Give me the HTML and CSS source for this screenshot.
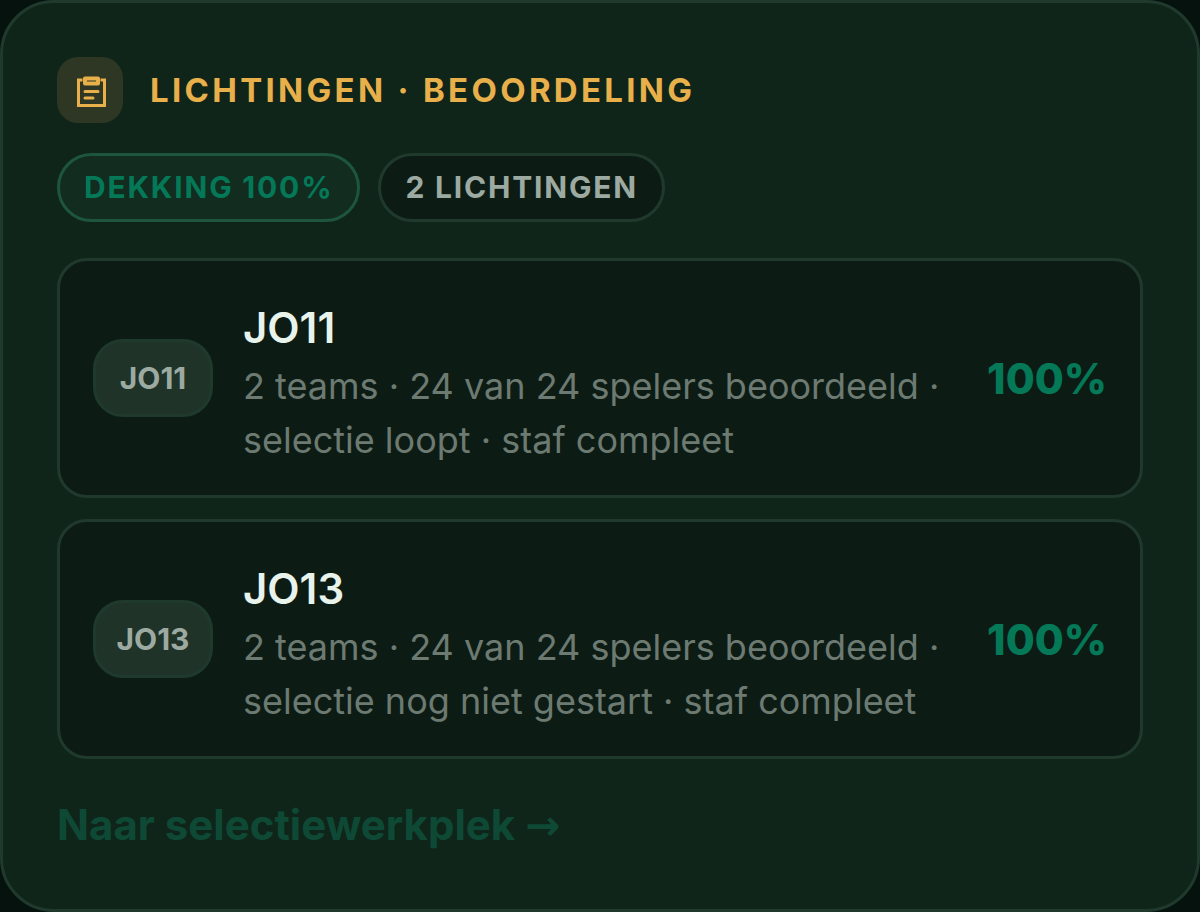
FILE: index.html
```html
<!DOCTYPE html>
<html lang="nl">
<head>
    <meta charset="UTF-8">
    <meta name="viewport" content="width=device-width, initial-scale=1.0">
    <title>Lichtingen · Beoordeling</title>
    <link rel="stylesheet" href="styles.css">
</head>
<body>
    <section class="card">
        <header class="card-header">
            <span class="card-icon">
                <svg viewBox="0 0 30 32" width="30" height="32" fill="none" stroke="currentColor" stroke-width="3" aria-hidden="true">
                    <path d="M6.5 5H2.5V30.5H28.5V5H24.5"/>
                    <path d="M9 3.5H22V8.5H9Z" stroke-width="4" stroke-linejoin="round"/>
                    <path d="M9 16.5H22M9 23H17" stroke-linecap="round"/>
                </svg>
            </span>
            <h2 class="card-title">LICHTINGEN · BEOORDELING</h2>
        </header>

        <div class="pills">
            <span class="pill pill-green">DEKKING 100%</span>
            <span class="pill">2 LICHTINGEN</span>
        </div>

        <div class="rows">
            <article class="row">
                <span class="badge">JO11</span>
                <div class="info">
                    <h3 class="name">JO11</h3>
                    <p class="meta">2 teams · 24 van 24 spelers beoordeeld · selectie loopt · staf compleet</p>
                </div>
                <span class="score">100%</span>
            </article>
            <article class="row">
                <span class="badge">JO13</span>
                <div class="info">
                    <h3 class="name">JO13</h3>
                    <p class="meta">2 teams · 24 van 24 spelers beoordeeld · selectie nog niet gestart · staf compleet</p>
                </div>
                <span class="score">100%</span>
            </article>
        </div>

        <a class="card-link" href="#selectie">Naar selectiewerkplek <span class="arrow">→</span></a>
    </section>
</body>
</html>
```

FILE: styles.css
```css
:root {
    --page: #06120d;
    --card: #10251a;
    --inset: #0c1c14;
    --border: #1f3a2d;
    --gold: #e8b04a;
    --green: #047857;
    --text: #e8f3ec;
    --text-soft: #9caaa1;
    --text-muted: #6d7a72;
}

* {
    box-sizing: border-box;
}

body {
    margin: 0;
    background: var(--page);
    color: var(--text);
    font-family: Inter, sans-serif;
}

h2, h3, p {
    margin: 0;
}

.card {
    padding: 54px;
    background: var(--card);
    border: 3px solid var(--border);
    border-radius: 54px;
}

.card-header {
    display: flex;
    align-items: center;
    gap: 27px;
}

.card-icon {
    display: flex;
    align-items: center;
    justify-content: center;
    width: 66px;
    height: 66px;
    padding: 2px 0 0 2px;
    border-radius: 21px;
    background: #2d3723;
    color: var(--gold);
}

.card-title {
    color: var(--gold);
    font-size: 33px;
    font-weight: 700;
    line-height: 48px;
    letter-spacing: 0.1em;
}

/* labels */
.pills {
    display: flex;
    flex-wrap: wrap;
    gap: 18px;
    margin-top: 30px;
}

.pill {
    padding: 9px 24px;
    background: var(--inset);
    border: 3px solid var(--border);
    border-radius: 999px;
    color: var(--text-soft);
    font-size: 30px;
    font-weight: 700;
    line-height: 45px;
    letter-spacing: 0.06em;
}

.pill-green {
    background: #122c20;
    border-color: #1d553e;
    color: var(--green);
}

/* lichtingen */
.rows {
    display: flex;
    flex-direction: column;
    gap: 21px;
    margin-top: 36px;
}

.row {
    display: flex;
    align-items: center;
    gap: 30px;
    padding: 27px 33px;
    background: var(--inset);
    border: 3px solid var(--border);
    border-radius: 30px;
}

.badge {
    flex: none;
    width: 120px;
    background: #1f3328;
    border: 3px solid var(--border);
    border-radius: 30px;
    color: var(--text-soft);
    font-size: 30px;
    font-weight: 700;
    line-height: 72px;
    text-align: center;
}

.info {
    flex: 1;
    min-width: 0;
    padding: 8px 0 1px;
}

.name {
    font-size: 42px;
    font-weight: 600;
    line-height: 63px;
}

.meta {
    color: var(--text-muted);
    font-size: 36px;
    line-height: 54px;
}

.score {
    flex: none;
    color: var(--green);
    font-size: 42px;
    font-weight: 800;
}

.card-link {
    display: block;
    width: fit-content;
    margin-top: 36px;
    color: #0e4936;
    font-size: 42px;
    font-weight: 700;
    line-height: 60px;
    text-decoration: none;
}

.arrow {
    font-family: "DejaVu Sans", sans-serif;
    line-height: 1;
}
```
